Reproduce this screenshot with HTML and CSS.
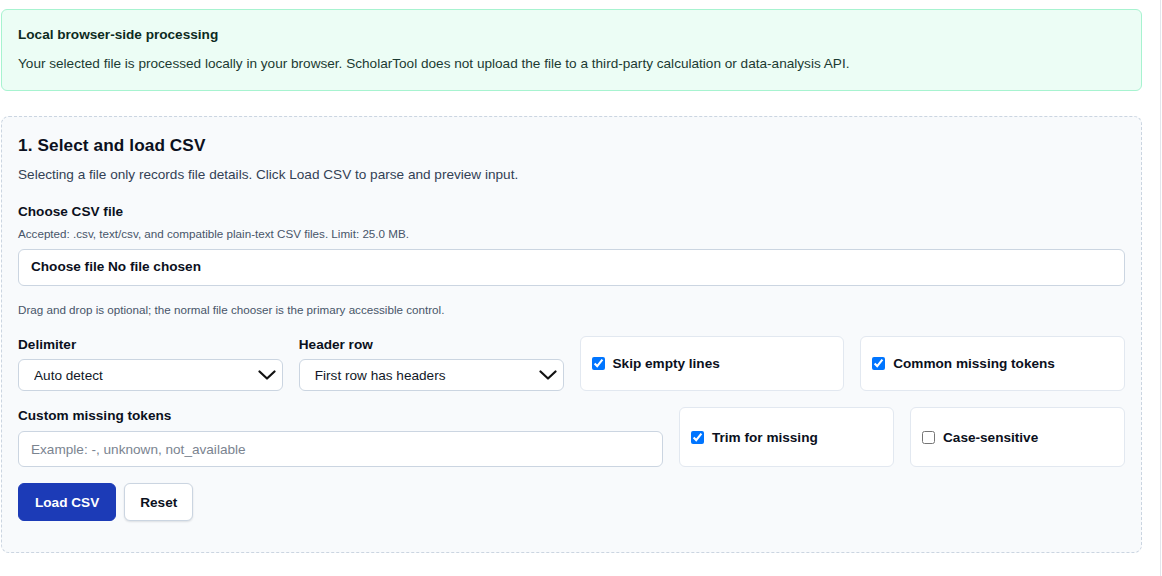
FILE: index.html
```html
<!DOCTYPE html>
<html lang="en">
<head>
<meta charset="utf-8">
<title>ScholarTool CSV</title>
<link rel="stylesheet" href="styles.css">
</head>
<body>
<div class="page">
  <div class="wrap">
    <section class="notice">
      <h3 class="notice-title">Local browser-side processing</h3>
      <p class="notice-text">Your selected file is processed locally in your browser. ScholarTool does not upload the file to a third-party calculation or data-analysis API.</p>
    </section>

    <section class="panel">
      <h2 class="panel-title">1. Select and load CSV</h2>
      <p class="panel-sub">Selecting a file only records file details. Click Load CSV to parse and preview input.</p>

      <div class="label lbl-file">Choose CSV file</div>
      <p class="hint hint-accept">Accepted: .csv, text/csv, and compatible plain-text CSV files. Limit: 25.0 MB.</p>
      <label class="file-box">
        <input class="file-input" type="file" accept=".csv,text/csv">
        <span class="file-text">Choose file No file chosen</span>
      </label>
      <p class="hint hint-drag">Drag and drop is optional; the normal file chooser is the primary accessible control.</p>

      <div class="row row-four">
        <div class="field">
          <div class="label">Delimiter</div>
          <div class="select-wrap">
            <select class="select">
              <option>Auto detect</option>
            </select>
            <svg class="chev" width="18" height="10" viewBox="0 0 18 10"><path d="M1.5 1.5 L9 8.5 L16.5 1.5" fill="none" stroke="#111" stroke-width="2.2" stroke-linecap="round" stroke-linejoin="round"/></svg>
          </div>
        </div>
        <div class="field">
          <div class="label">Header row</div>
          <div class="select-wrap">
            <select class="select">
              <option>First row has headers</option>
            </select>
            <svg class="chev" width="18" height="10" viewBox="0 0 18 10"><path d="M1.5 1.5 L9 8.5 L16.5 1.5" fill="none" stroke="#111" stroke-width="2.2" stroke-linecap="round" stroke-linejoin="round"/></svg>
          </div>
        </div>
        <label class="check-card"><input type="checkbox" class="cb" checked><span>Skip empty lines</span></label>
        <label class="check-card"><input type="checkbox" class="cb" checked><span>Common missing tokens</span></label>
      </div>

      <div class="row row-three">
        <div class="field field-wide">
          <div class="label">Custom missing tokens</div>
          <input class="text-input" type="text" placeholder="Example: -, unknown, not_available">
        </div>
        <label class="check-card"><input type="checkbox" class="cb" checked><span>Trim for missing</span></label>
        <label class="check-card"><input type="checkbox" class="cb"><span>Case-sensitive</span></label>
      </div>

      <div class="actions">
        <button class="btn btn-primary" type="button">Load CSV</button>
        <button class="btn btn-plain" type="button">Reset</button>
      </div>
    </section>
  </div>
</div>
</body>
</html>
```
FILE: styles.css
```css
* { box-sizing: border-box; }
html, body { margin: 0; padding: 0; background: #ffffff; }
body {
  font-family: "Liberation Sans", Arial, sans-serif;
  font-size: 13.6px;
  color: #111827;
}
.page {
  width: 1161px;
  min-height: 576px;
  border-right: 1px solid #e3e6ec;
}
.wrap {
  padding: 9px 0 0 1px;
  width: 1142px;
}
.notice {
  background: #ecfdf5;
  border: 1px solid #a7f3d0;
  border-radius: 6px;
  padding: 16px;
}
.notice-title {
  margin: 0 0 10px;
  font-size: 13.6px;
  line-height: 17px;
  font-weight: 700;
  color: #0c2a22;
}
.notice-text {
  margin: 0;
  font-size: 13.6px;
  line-height: 21px;
  color: #1b3a32;
}
.panel {
  margin-top: 25px;
  background: #f8fafc;
  border: 1px dashed #cbd5e1;
  border-radius: 8px;
  padding: 17px 16px 31px;
}
.panel-title {
  margin: 0;
  font-size: 17.2px;
  line-height: 23px;
  font-weight: 700;
  color: #0b1020;
  letter-spacing: 0.1px;
}
.panel-sub {
  margin: 7px 0 0;
  line-height: 21px;
  color: #334155;
}
.label {
  font-weight: 700;
  font-size: 13.6px;
  line-height: 17px;
  color: #0b1020;
}
.lbl-file { margin-top: 18px; }
.hint {
  margin: 0;
  font-size: 11.65px;
  line-height: 18px;
  color: #475569;
}
.hint-accept { margin-top: 5px; }
.hint-drag { margin-top: 15px; }
.file-box {
  display: flex;
  align-items: center;
  margin-top: 6px;
  height: 37px;
  padding: 0 12px 2px;
  background: #ffffff;
  border: 1px solid #cbd5e1;
  border-radius: 6px;
  cursor: pointer;
}
.file-input {
  position: absolute;
  width: 1px;
  height: 1px;
  opacity: 0;
  overflow: hidden;
}
.file-text {
  font-weight: 700;
  font-size: 13.6px;
  color: #0b1020;
}
.row {
  display: grid;
  gap: 16px;
}
.row-four {
  margin-top: 17px;
  grid-template-columns: repeat(4, 1fr);
}
.row-three {
  margin-top: 16px;
  grid-template-columns: 3fr 1fr 1fr;
}
.field {
  display: flex;
  flex-direction: column;
  gap: 6px;
}
.field-wide { gap: 7px; }
.select-wrap {
  position: relative;
}
.select {
  appearance: none;
  -webkit-appearance: none;
  width: 100%;
  height: 32px;
  margin: 0;
  padding: 0 30px 0 15px;
  font-family: inherit;
  font-size: 13.6px;
  color: #111827;
  background: #ffffff;
  border: 1px solid #cbd5e1;
  border-radius: 6px;
}
.chev {
  position: absolute;
  right: 7px;
  top: 11px;
  pointer-events: none;
}
.text-input {
  width: 100%;
  height: 36px;
  margin: 0;
  padding: 0 12px;
  font-family: inherit;
  font-size: 13.6px;
  color: #111827;
  background: #ffffff;
  border: 1px solid #cbd5e1;
  border-radius: 6px;
}
.text-input::placeholder { color: #7b8490; }
.check-card {
  display: flex;
  align-items: center;
  gap: 8px;
  padding: 0 12px 0 12px;
  background: #ffffff;
  border: 1px solid #e2e8f0;
  border-radius: 6px;
  font-weight: 700;
  font-size: 13.6px;
  color: #0b1020;
}
.cb {
  width: 13px;
  height: 13px;
  margin: 0 0 0 -1px;
  flex: none;
}
.actions {
  display: flex;
  gap: 8px;
  margin-top: 16px;
}
.btn {
  height: 38px;
  padding: 0 16px;
  font-family: inherit;
  font-size: 13.6px;
  font-weight: 700;
  border-radius: 6px;
  cursor: pointer;
}
.btn-primary {
  background: #1c3bb7;
  color: #ffffff;
  border: 1px solid #1c3bb7;
}
.btn-plain {
  background: #ffffff;
  color: #0b1020;
  border: 1px solid #cbd5e1;
  padding: 0 15px;
  box-shadow: 0 1px 2px rgba(15, 23, 42, 0.12);
}
```
